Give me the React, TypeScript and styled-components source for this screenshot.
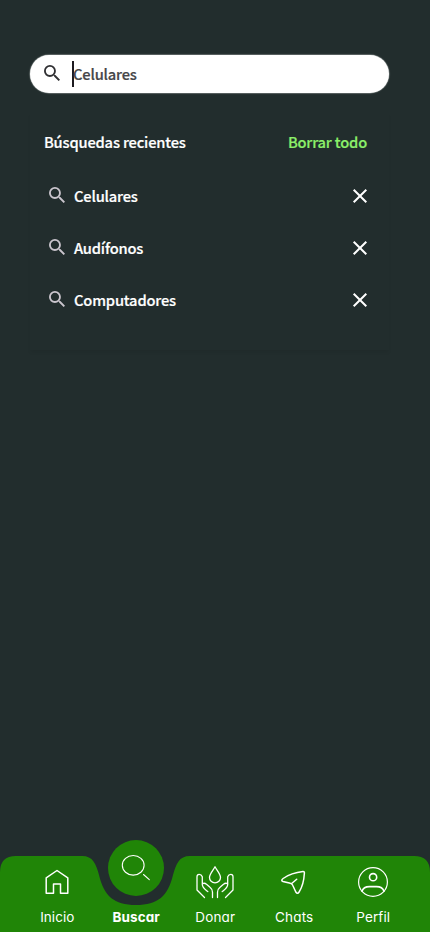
import React from "react";
import styled, { createGlobalStyle } from "styled-components";

const GlobalStyle = createGlobalStyle`
  * { box-sizing: border-box; }
  body { margin: 0; background: #222d2d; }
  button { border: 0; padding: 0; background: none; font: inherit; color: inherit; letter-spacing: inherit; }
  svg { display: block; }
`;

const Screen = styled.div`
  width: 430px;
  height: 932px;
  display: flex;
  flex-direction: column;
  background: #222d2d;
  color: #fff;
  font: 500 14.7px/24px "Noto Sans CJK JP", "Noto Sans CJK SC", sans-serif;
  letter-spacing: -0.18px;
  -webkit-text-stroke: 0.2px currentColor;
  overflow: hidden;
`;

const Main = styled.main`
  flex: 1;
  padding: 55px 41px 0 30px;
`;

const SearchBar = styled.div`
  height: 38px;
  padding: 0 14px 2px;
  display: flex;
  align-items: center;
  border-radius: 19px;
  background: #fff;
  color: #464649;
  box-shadow: 0 0 1px 0.5px #89908f;
`;

const Caret = styled.span`
  width: 2px;
  height: 26px;
  margin: 2px -1px 0 12px;
  background: #1d1b20;
`;

const Query = styled.span`
  padding-top: 1px;
`;

const Recents = styled.section`
  height: 237px;
  margin-top: 20px;
  padding: 17px 22px 0 14px;
  box-shadow: 0 3px 4px -1px rgba(0, 0, 0, 0.08);
`;

const RecentsHeader = styled.header`
  height: 24px;
  display: flex;
  align-items: center;
  justify-content: space-between;
`;

const ClearAll = styled.button`
  color: #8cf06a;
`;

const RecentList = styled.ul`
  list-style: none;
  margin: 16px -1px 0 0;
  padding: 0;
`;

const RecentRow = styled.li`
  height: 52px;
  display: flex;
  align-items: center;
  padding-left: 5px;
`;

const MagnifierBox = styled.span`
  margin-bottom: 2px;
`;

const RecentLabel = styled.span`
  flex: 1;
  margin-left: 9px;
`;

const NavBar = styled.nav`
  position: relative;
  height: 92px;
  padding: 0 17.5px;
  display: grid;
  grid-template-columns: repeat(5, 79px);
  letter-spacing: 0;
  -webkit-text-stroke: 0;
`;

const NavShape = styled.svg`
  position: absolute;
  inset: 0;
`;

const NavItem = styled.button<{ $active?: boolean }>`
  position: relative;
  height: 92px;
  display: flex;
  flex-direction: column;
  align-items: center;
  justify-content: flex-end;
  color: #fff;
  font: ${(p) => (p.$active ? 700 : 400)} 13.5px/20px Inter, "Noto Sans", sans-serif;
  font-feature-settings: "cv11" 1;
  padding-bottom: 5px;
`;

const IconBox = styled.span<{ $active?: boolean }>`
  width: ${(p) => (p.$active ? 56 : 40)}px;
  height: ${(p) => (p.$active ? 56 : 40)}px;
  margin-bottom: ${(p) => (p.$active ? 11 : 5)}px;
  border-radius: 50%;
  background: ${(p) => (p.$active ? "#208507" : "transparent")};
  display: grid;
  place-items: center;
`;

const NavLabel = styled.span<{ $spacing: number }>`
  padding-left: 0.5px;
  letter-spacing: ${(p) => p.$spacing}px;
`;

const Magnifier = ({ color }: { color: string }) => (
  <svg width="16" height="16" viewBox="3 3 17.49 17.49" fill={color}>
    <path d="M15.5 14h-.79l-.28-.27A6.471 6.471 0 0 0 16 9.5 6.5 6.5 0 1 0 9.5 16c1.61 0 3.09-.59 4.23-1.57l.27.28v.79l5 4.99L20.49 19l-4.99-5zm-6 0C7.01 14 5 11.99 5 9.5S7.01 5 9.5 5 14 7.01 14 9.5 11.99 14 9.5 14z" />
  </svg>
);

const Cross = () => (
  <svg width="16" height="16" viewBox="0 0 16 16" fill="none" stroke="#fff" strokeWidth="2">
    <path d="M1.7 1.7 14.3 14.3M14.3 1.7 1.7 14.3" />
  </svg>
);

const Icon = ({ children, width = 1.3 }: { children: React.ReactNode; width?: number }) => (
  <svg width="40" height="40" viewBox="0 0 40 40" fill="none" stroke="#fff" strokeWidth={width} strokeLinejoin="round" strokeLinecap="round">
    {children}
  </svg>
);

const items = [
  {
    label: "Inicio",
    spacing: 0.05,
    icon: (
      <Icon width={1.5}>
        <path d="M9.2 31.3V15.8L20 8.5 30.800 15.8V31.300H23.500V22H16.500V31.300Z" />
      </Icon>
    ),
  },
  {
    label: "Buscar",
    spacing: 0.1,
    active: true,
    icon: (
      <Icon width={1.1}>
        <ellipse cx="17.2" cy="17.3" rx="10.9" ry="9.8" />
        <path d="M27.5 26.5 33.3 31.6" />
      </Icon>
    ),
  },
  {
    label: "Donar",
    spacing: 0.15,
    icon: (
      <Icon width={1.3}>
        <path d="M20 4.8C18 8.500 14.500 11.800 14.500 15.500a5.500 5.300 0 0 0 11 0C25.500 11.800 22 8.500 20 4.800Z" />
        <path d="M9.500 35.500 2 28V14.700Q2 12.400 4.200 12.400T7.300 14.700V22.800C7.600 26 9.500 27 12.800 29.500M7.300 21.700Q9.500 20.500 11.500 22.300L15 25.300Q17.500 27.300 17.500 30.200V35.500" />
        <path d="M30.500 35.500 38 28V14.700Q38 12.400 35.800 12.400T32.700 14.700V22.800C32.400 26 30.500 27 27.200 29.500M32.700 21.700Q30.500 20.500 28.500 22.300L25 25.300Q22.500 27.300 22.500 30.200V35.500" />
      </Icon>
    ),
  },
  {
    label: "Chats",
    spacing: 0.15,
    icon: (
      <Icon width={1.5}>
        <path d="M29 9.600Q30.500 9.500 30.400 11C30 18 28 25.500 25.100 30Q23.500 32.600 21.800 30L18.700 23.300Q18 21.600 16.300 21.300L9 19.500Q6.500 18.500 9.100 16.500C14.500 12.800 21.500 10.400 29 9.600ZM17.700 21.500 22.700 17.200" />
      </Icon>
    ),
  },
  {
    label: "Perfil",
    spacing: 0.1,
    icon: (
      <Icon width={1.2}>
        <circle cx="20" cy="20" r="14.400" />
        <circle cx="20.100" cy="15.200" r="3.600" strokeWidth="1.600" />
        <path d="M9 29.200C10 26 13 24.600 16.500 24.600H23.500C27 24.600 30 26 31 29.200" strokeWidth="1.600" />
      </Icon>
    ),
  },
];

export default function App() {
  return (
    <Screen>
      <GlobalStyle />
      <Main>
        <SearchBar>
          <Magnifier color="#303033" />
          <Caret />
          <Query>Celulares</Query>
        </SearchBar>
        <Recents>
          <RecentsHeader>
            <span>Búsquedas recientes</span>
            <ClearAll>Borrar todo</ClearAll>
          </RecentsHeader>
          <RecentList>
            {["Celulares", "Audífonos", "Computadores"].map((term) => (
              <RecentRow key={term}>
                <MagnifierBox>
                  <Magnifier color="#cac5cd" />
                </MagnifierBox>
                <RecentLabel>{term}</RecentLabel>
                <button aria-label={`Borrar ${term}`}>
                  <Cross />
                </button>
              </RecentRow>
            ))}
          </RecentList>
        </Recents>
      </Main>
      <NavBar>
        <NavShape width="430" height="92" viewBox="0 0 430 92">
          <path fill="#208507" d="M0 92V32Q0 16 16 16H82C93 16 96 24 99 35C104 56 114 65 136 65C158 65 168 56 173 35C176 24 179 16 190 16H414Q430 16 430 32V92Z" />
        </NavShape>
        {items.map((item) => (
          <NavItem key={item.label} $active={item.active}>
            <IconBox $active={item.active}>{item.icon}</IconBox>
            <NavLabel $spacing={item.spacing}>{item.label}</NavLabel>
          </NavItem>
        ))}
      </NavBar>
    </Screen>
  );
}
